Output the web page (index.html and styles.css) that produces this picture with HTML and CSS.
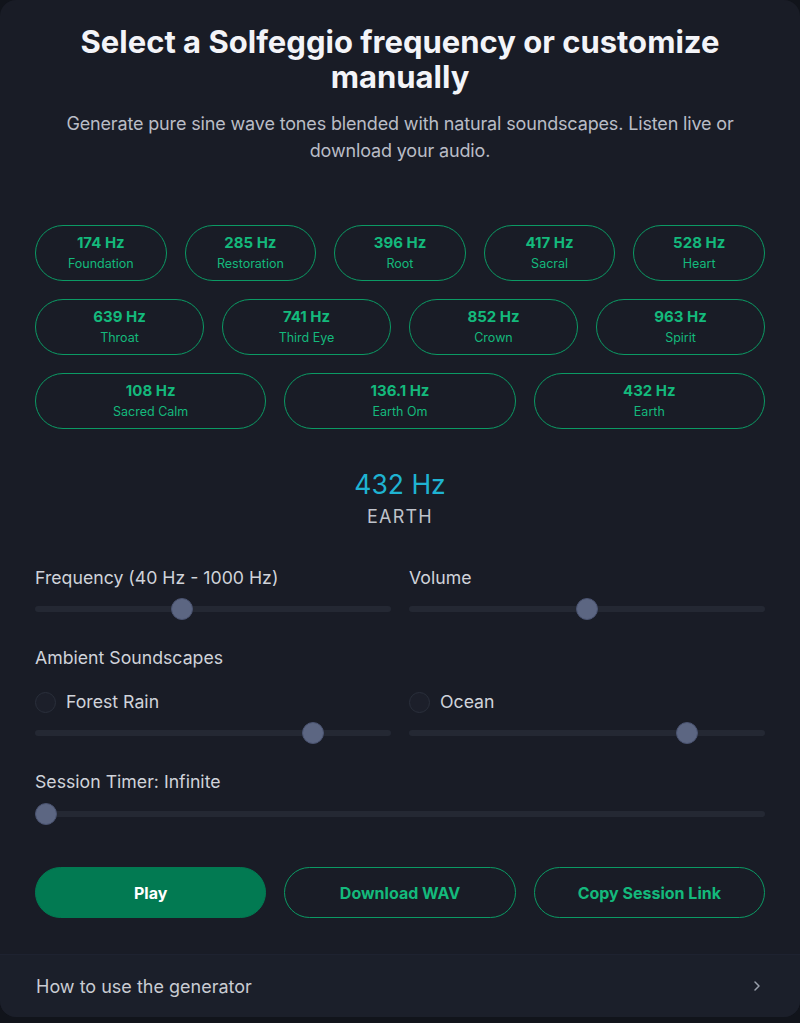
FILE: index.html
```html
<!DOCTYPE html>
<html lang="en">
<head>
    <meta charset="UTF-8">
    <meta name="viewport" content="width=device-width, initial-scale=1.0">
    <title>Solfeggio Tone Generator</title>
    <link rel="stylesheet" href="styles.css">
</head>
<body>
    <div class="card">
        <div class="card-body">
            <h1>Select a Solfeggio frequency or customize manually</h1>
            <p class="subtitle">Generate pure sine wave tones blended with natural soundscapes. Listen live or download your audio.</p>

            <div class="presets">
                <div class="preset-row">
                    <button class="preset"><span class="hz">174 Hz</span><span class="name">Foundation</span></button>
                    <button class="preset"><span class="hz">285 Hz</span><span class="name">Restoration</span></button>
                    <button class="preset"><span class="hz">396 Hz</span><span class="name">Root</span></button>
                    <button class="preset"><span class="hz">417 Hz</span><span class="name">Sacral</span></button>
                    <button class="preset"><span class="hz">528 Hz</span><span class="name">Heart</span></button>
                </div>
                <div class="preset-row">
                    <button class="preset"><span class="hz">639 Hz</span><span class="name">Throat</span></button>
                    <button class="preset"><span class="hz">741 Hz</span><span class="name">Third Eye</span></button>
                    <button class="preset"><span class="hz">852 Hz</span><span class="name">Crown</span></button>
                    <button class="preset"><span class="hz">963 Hz</span><span class="name">Spirit</span></button>
                </div>
                <div class="preset-row">
                    <button class="preset"><span class="hz">108 Hz</span><span class="name">Sacred Calm</span></button>
                    <button class="preset"><span class="hz">136.1 Hz</span><span class="name">Earth Om</span></button>
                    <button class="preset"><span class="hz">432 Hz</span><span class="name">Earth</span></button>
                </div>
            </div>

            <div class="current">
                <div class="current-hz">432 Hz</div>
                <div class="current-name">EARTH</div>
            </div>

            <div class="two-col">
                <div class="control">
                    <label class="control-label">Frequency (40 Hz - 1000 Hz)</label>
                    <input type="range" class="slider" min="40" max="1000" value="432">
                </div>
                <div class="control">
                    <label class="control-label">Volume</label>
                    <input type="range" class="slider" min="0" max="100" value="50">
                </div>
            </div>

            <div class="ambient">
                <div class="control-label">Ambient Soundscapes</div>
                <div class="two-col">
                    <div class="control">
                        <label class="toggle"><span class="circle"></span>Forest Rain</label>
                        <input type="range" class="slider" min="0" max="100" value="80">
                    </div>
                    <div class="control">
                        <label class="toggle"><span class="circle"></span>Ocean</label>
                        <input type="range" class="slider" min="0" max="100" value="80">
                    </div>
                </div>
            </div>

            <div class="control timer">
                <label class="control-label">Session Timer: Infinite</label>
                <input type="range" class="slider" min="0" max="120" value="0">
            </div>

            <div class="actions">
                <button class="action primary">Play</button>
                <button class="action">Download WAV</button>
                <button class="action">Copy Session Link</button>
            </div>
        </div>

        <div class="howto">
            <span>How to use the generator</span>
            <svg width="10" height="14" viewBox="0 0 10 14"><path d="M3 3l4 4-4 4" fill="none" stroke="#9aa0ac" stroke-width="1.5" stroke-linecap="round" stroke-linejoin="round"/></svg>
        </div>
    </div>
</body>
</html>
```

FILE: styles.css
```css
* {
    box-sizing: border-box;
}

body {
    margin: 0;
    padding: 0 0 5px;
    background-color: #11141b;
    font-family: Inter, "Noto Sans", sans-serif;
    color: #d4d7de;
}

.card {
    background-color: #191c26;
    border-radius: 16px;
    overflow: hidden;
}

.card-body {
    padding: 24px 35px 36px;
}

h1 {
    margin: 0;
    text-align: center;
    font-size: 31px;
    line-height: 35px;
    font-weight: 700;
    color: #f3f4f8;
}

.subtitle {
    margin: 16px 0 0;
    text-align: center;
    font-size: 18px;
    line-height: 27px;
    letter-spacing: -0.15px;
    color: #b9bdc6;
}

.presets {
    margin-top: 61px;
    display: flex;
    flex-direction: column;
    gap: 18px;
}

.preset-row {
    display: flex;
    gap: 18px;
}

.preset {
    flex: 1;
    height: 56px;
    border: 1.5px solid #0b9a64;
    border-radius: 999px;
    background: transparent;
    color: #14b97c;
    font-family: inherit;
    display: flex;
    flex-direction: column;
    align-items: center;
    justify-content: center;
    gap: 4px;
    cursor: pointer;
}

.preset .hz {
    font-size: 15px;
    font-weight: 700;
    line-height: 18px;
}

.preset .name {
    font-size: 12.5px;
    line-height: 16px;
}

.current {
    margin-top: 38px;
    text-align: center;
}

.current-hz {
    font-size: 26.5px;
    line-height: 34px;
    color: #1fb3d2;
}

.current-name {
    margin-top: 4px;
    font-size: 18px;
    line-height: 24px;
    letter-spacing: 1.2px;
    color: #bfc3cb;
}

.two-col {
    display: grid;
    grid-template-columns: 1fr 1fr;
    gap: 18px;
}

.current + .two-col {
    margin-top: 37px;
}

.control {
    display: flex;
    flex-direction: column;
}

.control-label {
    font-size: 17.7px;
    line-height: 24px;
    color: #d0d3da;
}

.slider {
    -webkit-appearance: none;
    appearance: none;
    width: 100%;
    height: 6px;
    margin: 16px 0 0;
    background: #242833;
    border-radius: 3px;
    outline: none;
}

.slider::-webkit-slider-thumb {
    -webkit-appearance: none;
    width: 22px;
    height: 22px;
    border-radius: 50%;
    background: #5c6682;
    border: 1px solid #4a5370;
    cursor: pointer;
}

.ambient {
    margin-top: 34px;
}

.ambient .two-col {
    margin-top: 20px;
}

.toggle {
    display: flex;
    align-items: center;
    gap: 10px;
    font-size: 17.7px;
    line-height: 24px;
    color: #d0d3da;
}

.toggle + .slider {
    margin-top: 16px;
}

.circle {
    width: 21px;
    height: 21px;
    border-radius: 50%;
    border: 1.5px solid #2a2f3b;
    background: #1c1f2a;
}

.timer {
    margin-top: 34px;
}

.timer .slider {
    margin-top: 17px;
}

.actions {
    margin-top: 50px;
    display: grid;
    grid-template-columns: repeat(3, 1fr);
    gap: 18px;
}

.action {
    height: 51px;
    border-radius: 999px;
    border: 1.5px solid #0b9a64;
    background: transparent;
    color: #14b97c;
    font-family: inherit;
    font-size: 16px;
    font-weight: 700;
    cursor: pointer;
}

.action.primary {
    background-color: #027a52;
    border-color: #027a52;
    color: #ffffff;
}

.howto {
    display: flex;
    justify-content: space-between;
    align-items: center;
    height: 63px;
    padding: 0 38px 0 36px;
    background-color: #1b1f2a;
    border-top: 1px solid #1e2230;
    font-size: 18px;
    color: #c9ccd3;
}
```
